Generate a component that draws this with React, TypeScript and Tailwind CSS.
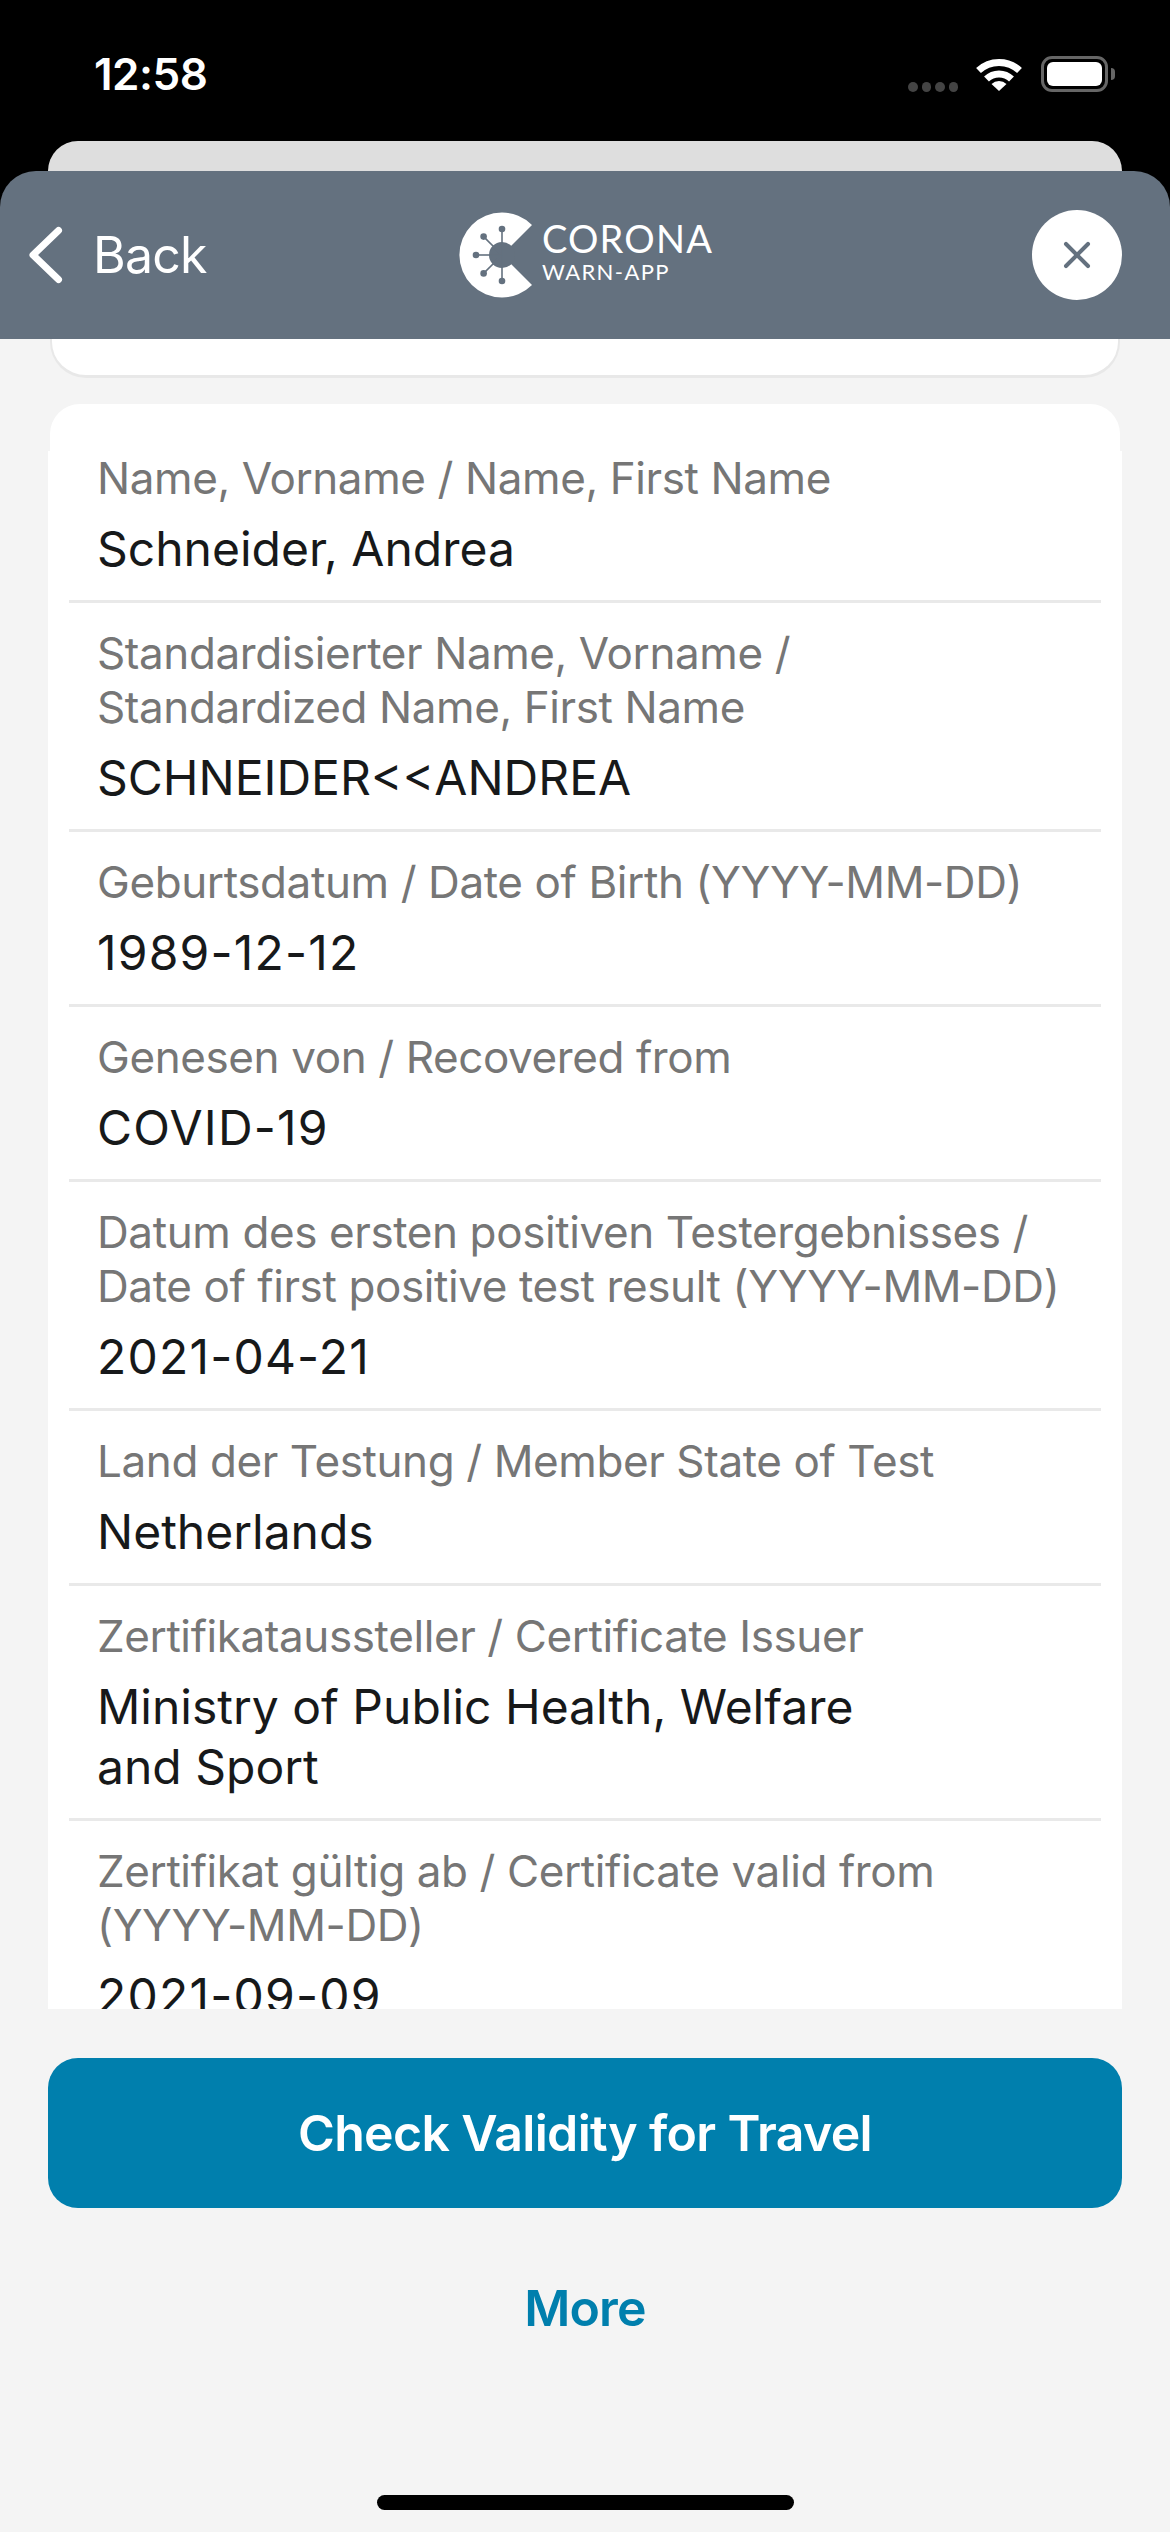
import { X } from "lucide-react";

const rows = [
  { label: "Name, Vorname / Name, First Name", value: "Schneider, Andrea" },
  {
    label: "Standardisierter Name, Vorname /\nStandardized Name, First Name",
    value: "SCHNEIDER<<ANDREA",
  },
  { label: "Geburtsdatum / Date of Birth (YYYY-MM-DD)", value: "1989-12-12", numeric: true },
  { label: "Genesen von / Recovered from", value: "COVID-19", numeric: true },
  {
    label:
      "Datum des ersten positiven Testergebnisses /\nDate of first positive test result (YYYY-MM-DD)",
    value: "2021-04-21",
    numeric: true,
  },
  { label: "Land der Testung / Member State of Test", value: "Netherlands" },
  {
    label: "Zertifikataussteller / Certificate Issuer",
    value: "Ministry of Public Health, Welfare\nand Sport",
  },
  {
    label: "Zertifikat gültig ab / Certificate valid from\n(YYYY-MM-DD)",
    value: "2021-09-09",
    numeric: true,
  },
];

const Logo = () => {
  const spokes = [90, 135, 180, 225, 270];
  return (
    <svg width="86" height="86" viewBox="-43 -43 86 86" className="shrink-0">
      <path d="M30 -30 A42.5 42.5 0 1 0 30 30 L0 0 Z" fill="#fff" />
      <circle r="13" fill="#64717f" />
      {spokes.map((a) => {
        const x = Math.cos((a * Math.PI) / 180) * 26;
        const y = Math.sin((a * Math.PI) / 180) * 26;
        return (
          <g key={a}>
            <line x1="0" y1="0" x2={x} y2={y} stroke="#64717f" strokeWidth="1.6" />
            <circle cx={x} cy={y} r="3.3" fill="#64717f" />
          </g>
        );
      })}
    </svg>
  );
};

const StatusBar = () => (
  <div className="flex h-[141px] items-start justify-between pl-[94px] pr-[55px] pt-[50px]">
    <span className="font-['Inter',sans-serif] text-[44px] leading-[48px] font-semibold tracking-[-0.5px] text-white">
      12:58
    </span>
    <div className="flex items-start pt-[6px]">
      <div className="mt-[26px] flex gap-[4px]">
        <div className="size-[9.5px] rounded-full bg-[#444]" />
        <div className="size-[9.5px] rounded-full bg-[#444]" />
        <div className="size-[9.5px] rounded-full bg-[#444]" />
        <div className="size-[9.5px] rounded-full bg-[#444]" />
      </div>
      <svg width="48" height="34" viewBox="0 0 48 34" className="ml-[17px] mt-[1px]" fill="none">
        <path d="M3.5 13.5 A30 30 0 0 1 44.5 13.5" stroke="#fff" strokeWidth="7" />
        <path d="M11.5 22 A18 18 0 0 1 36.5 22" stroke="#fff" strokeWidth="7" />
        <path d="M16.5 27 A11 11 0 0 1 31.5 27 L24 34 Z" fill="#fff" />
      </svg>
      <div className="ml-[18px] flex items-center">
        <div className="h-[36px] w-[67px] rounded-[11px] border-[3px] border-[#666] p-[3px]">
          <div className="h-full w-full rounded-[6px] bg-white" />
        </div>
        <div className="ml-[3px] h-[12px] w-[4px] rounded-r-full bg-[#666]" />
      </div>
    </div>
  </div>
);

export default function App() {
  return (
    <div className="flex h-[2532px] w-[1170px] flex-col overflow-hidden bg-black font-['Inter',sans-serif]">
      <StatusBar />
      <div className="mx-[48px] h-[30px] rounded-t-[30px] bg-[#dedede]" />

      <header className="flex h-[168px] shrink-0 items-center justify-between rounded-t-[36px] bg-[#64717f] pr-[48px]">
        <div className="flex w-[300px] items-center text-white">
          <svg width="42" height="64" viewBox="0 0 42 64" fill="none" className="ml-[24px]">
            <path
              d="M34.5 7.5 L9 32 L34.5 56.5"
              stroke="#fff"
              strokeWidth="7"
              strokeLinecap="round"
              strokeLinejoin="round"
            />
          </svg>
          <span className="ml-[27px] text-[50px] leading-none tracking-[-0.8px]">Back</span>
        </div>
        <div className="ml-[-160px] flex items-center">
          <Logo />
          <div className="ml-[-3px] flex flex-col font-['Lato',sans-serif] text-white">
            <span className="mt-[-8px] text-[38px] leading-[38px] tracking-[1.2px]">CORONA</span>
            <span className="mt-[3px] text-[22px] leading-[24px] tracking-[1.4px]">WARN-APP</span>
          </div>
        </div>
        <div className="flex size-[90px] items-center justify-center rounded-full bg-white">
          <X className="size-[44px] text-[#64717f]" strokeWidth={2.2} />
        </div>
      </header>

      <main className="flex flex-1 flex-col bg-[#f4f4f4]">
        <div className="h-[1670px] shrink-0 overflow-hidden">
          <div className="mx-[50px] h-[39px] rounded-b-[36px] border-x-[2px] border-b-[3px] border-[#e8e8e8] bg-white" />
          <div className="mx-[50px] mt-[26px] h-[47px] rounded-t-[30px] bg-white" />
          <div className="mx-[48px] bg-white px-[21px] pb-[40px]">
            {rows.map((row) => (
              <div
                key={row.label}
                className="border-b-[3px] border-[#e9e9e9] pb-[21px] pt-[23px] first:pt-0 last:border-b-0"
              >
                <p className="whitespace-pre-line px-[28px] text-[44px] leading-[54px] tracking-[-0.4px] text-[#767676]">
                  {row.label}
                </p>
                <p
                  className={
                    row.numeric
                      ? "mt-[14px] whitespace-pre-line px-[28px] text-[48px] leading-[60px] tracking-[1.2px] text-[#17191a]"
                      : "mt-[14px] whitespace-pre-line px-[28px] text-[48px] leading-[60px] text-[#17191a]"
                  }
                >
                  {row.value}
                </p>
              </div>
            ))}
          </div>
        </div>

        <button className="mx-[48px] mt-[49px] flex h-[150px] shrink-0 items-center justify-center rounded-[30px] bg-[#007fad] text-[50px] font-semibold tracking-[-0.65px] text-white">
          Check Validity for Travel
        </button>
        <div className="mt-[70px] text-center text-[50px] leading-[60px] font-semibold tracking-[-0.8px] text-[#007fad]">
          More
        </div>
        <div className="mx-auto mt-[157px] h-[15px] w-[417px] rounded-full bg-black" />
      </main>
    </div>
  );
}
